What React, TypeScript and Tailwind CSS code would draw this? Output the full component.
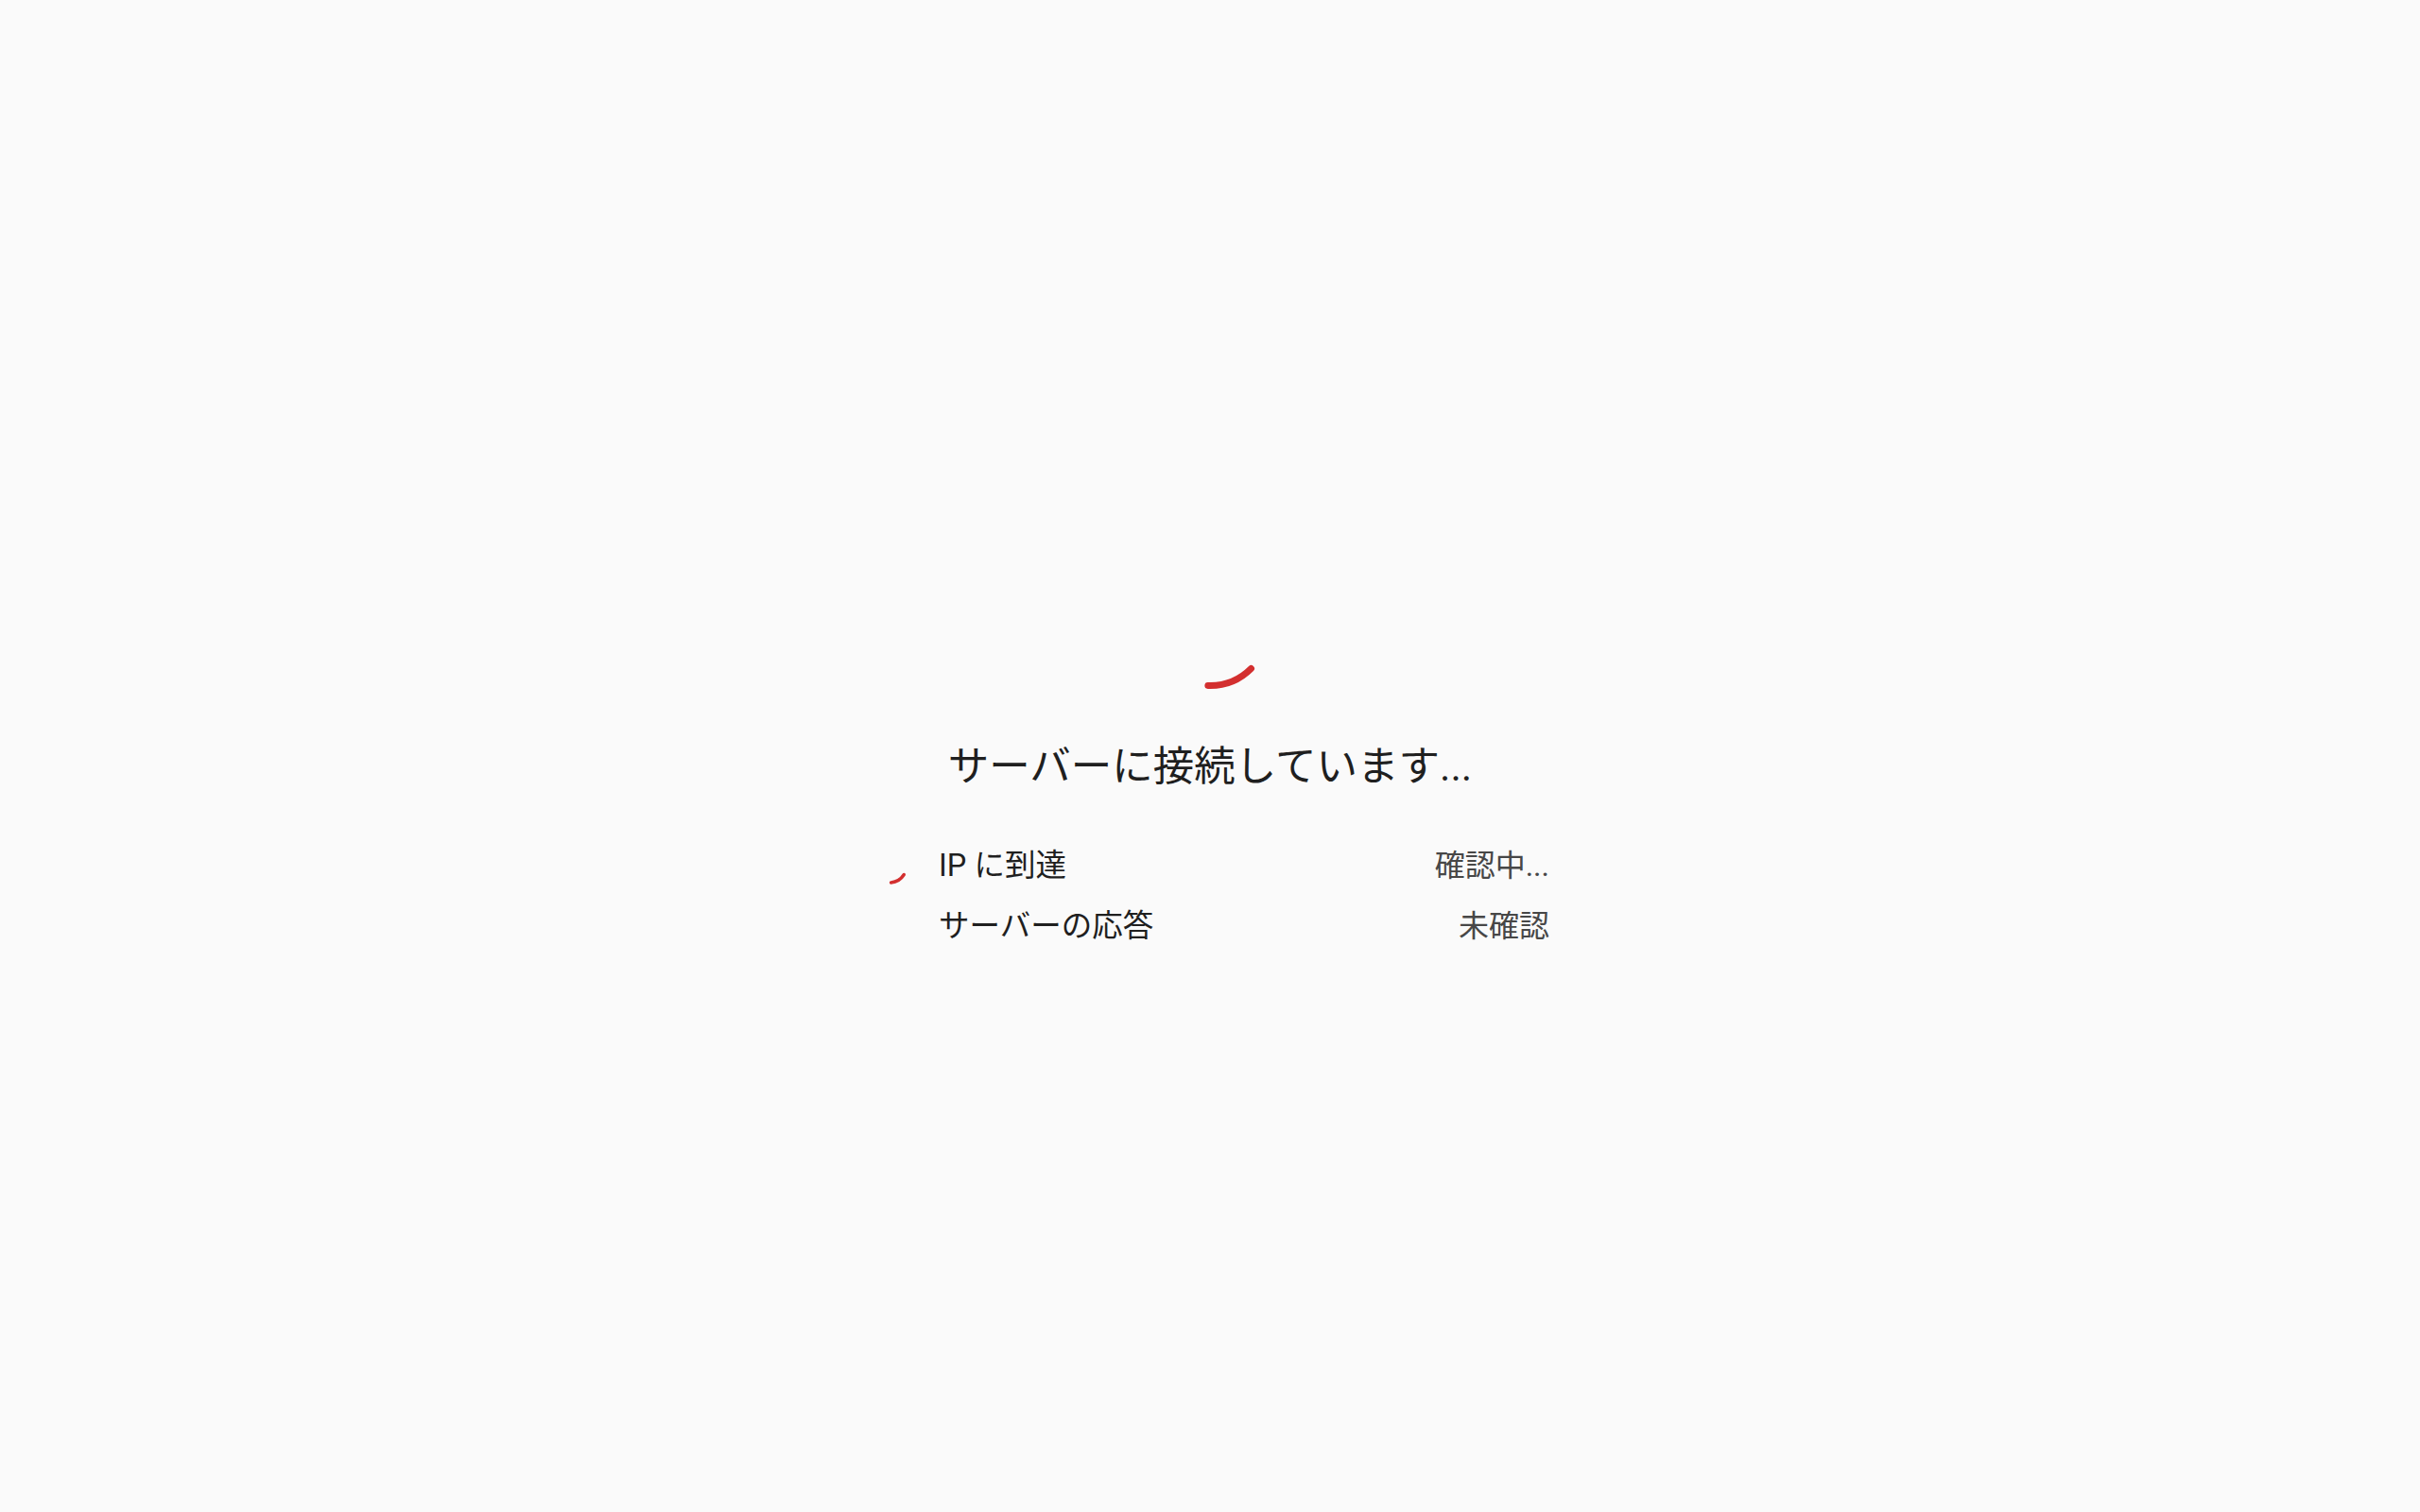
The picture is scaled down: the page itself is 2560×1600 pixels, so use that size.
const FONT = "font-['Roboto','Noto_Sans_CJK_JP',sans-serif]";

function arcPath(cx: number, cy: number, r: number, a0: number, a1: number) {
  const rad = (d: number) => (d * Math.PI) / 180;
  const x0 = cx + r * Math.cos(rad(a0));
  const y0 = cy + r * Math.sin(rad(a0));
  const x1 = cx + r * Math.cos(rad(a1));
  const y1 = cy + r * Math.sin(rad(a1));
  return `M ${x0.toFixed(2)} ${y0.toFixed(2)} A ${r} ${r} 0 0 1 ${x1.toFixed(2)} ${y1.toFixed(2)}`;
}

function Spinner({ size, stroke, r, from, to }: { size: number; stroke: number; r: number; from: number; to: number }) {
  const c = size / 2;
  return (
    <svg width={size} height={size} viewBox={`0 0 ${size} ${size}`} fill="none" overflow="visible">
      <path d={arcPath(c, c, r, from, to)} stroke="#d32f2f" strokeWidth={stroke} strokeLinecap="round" />
    </svg>
  );
}

const steps = [
  { label: "IP に到達", value: "確認中...", active: true },
  { label: "サーバーの応答", value: "未確認", active: false },
];

export default function App() {
  return (
    <div className={`flex min-h-screen w-full flex-col items-center justify-center bg-[#fafafa] pt-[8px] ${FONT}`}>
      {/* Main spinner */}
      <div className="mt-[3px] flex h-[128px] w-[128px] items-center justify-center">
        <Spinner size={128} stroke={7} r={61.5} from={45} to={92} />
      </div>

      <h1 className="mt-[55px] text-[43.5px] leading-[57px] font-normal text-[#1f1f1f]">
        サーバーに接続しています...
      </h1>

      {/* Steps */}
      <ul className="mt-[44px] flex w-[718px] flex-col">
        {steps.map((s) => (
          <li key={s.label} className="flex h-[64px] items-center">
            <div className="flex h-[40px] w-[40px] shrink-0 items-center justify-center">
              {s.active && <Spinner size={40} stroke={3.5} r={18} from={32} to={85} />}
            </div>
            <span className="ml-[32px] text-[32.5px] leading-[40px] text-[#1f1f1f]">{s.label}</span>
            <span className="ml-auto text-[32px] leading-[40px] text-[#474747]">{s.value}</span>
          </li>
        ))}
      </ul>
    </div>
  );
}
